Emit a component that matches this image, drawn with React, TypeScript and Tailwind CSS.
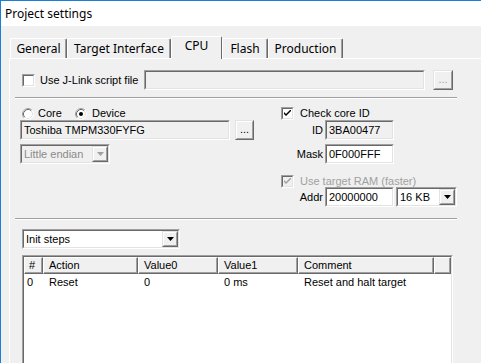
import React from "react";

const SUNK_OUT = "border border-t-[#a0a0a0] border-l-[#a0a0a0] border-r-white border-b-white";
const SUNK_IN = "h-full w-full border border-t-[#696969] border-l-[#696969] border-r-[#e3e3e3] border-b-[#e3e3e3]";
const RAISE_OUT = "border border-t-[#e3e3e3] border-l-[#e3e3e3] border-r-[#696969] border-b-[#696969] bg-[#f0f0f0]";
const RAISE_IN = "h-full w-full border border-t-white border-l-white border-r-[#a0a0a0] border-b-[#a0a0a0] flex items-center justify-center";

function Field({ w, bg, children }: { w: string; bg: string; children?: React.ReactNode }) {
  return (
    <div className={`${SUNK_OUT} ${w} h-[20px] shrink-0`}>
      <div className={`${SUNK_IN} ${bg} flex items-center pl-[2px] overflow-hidden whitespace-nowrap`}>{children}</div>
    </div>
  );
}

function Btn({ w, children }: { w: string; children?: React.ReactNode }) {
  return (
    <div className={`${RAISE_OUT} ${w} h-[20px] shrink-0`}>
      <div className={RAISE_IN}>{children}</div>
    </div>
  );
}

function Arrow({ color }: { color: string }) {
  return (
    <svg width="7" height="4" viewBox="0 0 7 4">
      <polygon points="0,0 7,0 3.5,4" fill={color} />
    </svg>
  );
}

function Combo({ w, bg, text, textColor, arrowColor }: { w: string; bg: string; text: string; textColor: string; arrowColor: string }) {
  return (
    <div className={`${SUNK_OUT} ${w} h-[20px] shrink-0`}>
      <div className={`${SUNK_IN} ${bg} flex items-center`}>
        <div className={`flex-1 pl-[2px] ${textColor} whitespace-nowrap overflow-hidden`}>{text}</div>
        <div className={`${RAISE_OUT} w-[16px] h-full shrink-0`}>
          <div className={RAISE_IN}>
            <Arrow color={arrowColor} />
          </div>
        </div>
      </div>
    </div>
  );
}

function Check({ checked, disabled }: { checked?: boolean; disabled?: boolean }) {
  return (
    <div className={`${SUNK_OUT} w-[13px] h-[13px] shrink-0`}>
      <div className={`${SUNK_IN} ${disabled ? "bg-[#f0f0f0]" : "bg-white"} flex items-center justify-center`}>
        {checked && (
          <svg width="7" height="7" viewBox="0 0 7 7">
            <path d="M0 2 L0 4 L2 6 L7 1 L7 -1 L2 4 Z" fill={disabled ? "#a0a0a0" : "#000"} />
          </svg>
        )}
      </div>
    </div>
  );
}

function Radio({ checked }: { checked?: boolean }) {
  return (
    <svg width="12" height="12" viewBox="0 0 12 12" className="shrink-0">
      <circle cx="6" cy="6" r="5.5" fill="#fff" />
      <path d="M2.11 9.89 A5.5 5.5 0 0 1 9.89 2.11" stroke="#a0a0a0" fill="none" />
      <path d="M9.89 2.11 A5.5 5.5 0 0 1 2.11 9.89" stroke="#fff" fill="none" />
      <path d="M2.82 9.18 A4.5 4.5 0 0 1 9.18 2.82" stroke="#696969" fill="none" />
      <path d="M9.18 2.82 A4.5 4.5 0 0 1 2.82 9.18" stroke="#e3e3e3" fill="none" />
      {checked && <circle cx="6" cy="6" r="2" fill="#000" />}
    </svg>
  );
}

function Sep() {
  return <div className="ml-[5px] w-[442px] h-[2px] border-t border-b border-t-[#a0a0a0] border-b-white" />;
}

const HCELL =
  "h-full shrink-0 border border-t-white border-l-white border-r-[#696969] border-b-[#696969] shadow-[inset_-1px_-1px_0_#a0a0a0] flex items-center whitespace-nowrap";

export default function App() {
  const tabs = [
    { t: "General", w: "w-[57px]" },
    { t: "Target Interface", w: "w-[104px]" },
    { t: "CPU", w: "w-[51px]", sel: true },
    { t: "Flash", w: "w-[46px]" },
    { t: "Production", w: "w-[75px]" },
  ];
  return (
    <div className="w-[481px] h-[363px] overflow-hidden bg-[#f0f0f0] border-t border-l border-[#1a7fd6] flex flex-col font-['Liberation_Sans',Arial,sans-serif] text-[11px] text-black leading-[13px]">
      <div className="h-[25px] shrink-0 bg-white pl-[4px] flex items-center font-['Noto_Sans',sans-serif] text-[12px] leading-[16px]">
        Project settings
      </div>
      <div className="mt-[10px] ml-[9px] h-[22px] flex items-start shrink-0 font-['Noto_Sans',sans-serif] text-[12px] leading-[16px]">
        {tabs.map((tb) =>
          tb.sel ? (
            <div
              key={tb.t}
              className={`${tb.w} h-[23px] relative z-10 bg-[#f0f0f0] border-t border-l border-r border-t-white border-l-white border-r-[#696969] rounded-t-[2px] flex justify-center pt-[1px]`}
            >
              {tb.t}
            </div>
          ) : (
            <div
              key={tb.t}
              className={`${tb.w} h-[20px] mt-[2px] border-t border-l border-r border-t-white border-l-white border-r-[#696969] rounded-t-[2px] flex justify-center pt-[2px] shadow-[inset_-1px_0_0_#a0a0a0]`}
            >
              {tb.t}
            </div>
          )
        )}
      </div>
      <div className="ml-[8px] w-[520px] flex-1 border-t border-l border-white flex flex-col">
        {/* script row */}
        <div className="mt-[11px] h-[20px] flex items-center">
          <div className="ml-[12px]">
            <Check />
          </div>
          <div className="w-[109px] pl-[5px] whitespace-nowrap">Use J-Link script file</div>
          <Field w="w-[281px]" bg="bg-[#f0f0f0]" />
          <div className="ml-[8px]">
            <Btn w="w-[20px]">
              <span className="text-[#a0a0a0] leading-[8px] pb-[2px]">...</span>
            </Btn>
          </div>
        </div>
        <div className="mt-[7px]">
          <Sep />
        </div>
        {/* section 2 */}
        <div className="mt-[8px] flex">
          <div className="ml-[10px] w-[261px] flex flex-col">
            <div className="h-[13px] flex items-center">
              <div className="w-[53px] ml-[2px] flex items-center">
                <Radio />
                <span className="ml-[4px]">Core</span>
              </div>
              <Radio checked />
              <span className="ml-[5px]">Device</span>
            </div>
            <div className="h-[20px] flex items-center">
              <Field w="w-[210px]" bg="bg-[#f0f0f0]">
                Toshiba TMPM330FYFG
              </Field>
              <div className="ml-[5px]">
                <Btn w="w-[19px]">
                  <span className="leading-[8px] pb-[2px]">...</span>
                </Btn>
              </div>
            </div>
            <div className="mt-[4px]">
              <Combo w="w-[90px]" bg="bg-[#f0f0f0]" text="Little endian" textColor="text-[#8a8a8a]" arrowColor="#a0a0a0" />
            </div>
          </div>
          <div className="flex flex-col">
            <div className="h-[13px] flex items-center">
              <Check checked />
              <span className="ml-[6px]">Check core ID</span>
            </div>
            <div className="h-[20px] flex items-center">
              <div className="w-[44px] text-right pr-[2px]">ID</div>
              <Field w="w-[69px]" bg="bg-[#f0f0f0]">
                3BA00477
              </Field>
            </div>
            <div className="mt-[4px] h-[20px] flex items-center">
              <div className="w-[44px] text-right pr-[2px]">Mask</div>
              <Field w="w-[69px]" bg="bg-white">
                0F000FFF
              </Field>
            </div>
            <div className="mt-[11px] h-[13px] flex items-center">
              <Check checked disabled />
              <span className="ml-[6px] text-[#a0a0a0]">Use target RAM (faster)</span>
            </div>
            <div className="-mt-[1px] h-[20px] flex items-center">
              <div className="w-[44px] text-right pr-[2px]">Addr</div>
              <Field w="w-[69px]" bg="bg-white">
                20000000
              </Field>
              <div className="ml-[2px]">
                <Combo w="w-[61px]" bg="bg-white" text="16 KB" textColor="text-black" arrowColor="#000" />
              </div>
            </div>
          </div>
        </div>
        <div className="mt-[11px]">
          <Sep />
        </div>
        <div className="mt-[9px] ml-[12px]">
          <Combo w="w-[158px]" bg="bg-white" text="Init steps" textColor="text-black" arrowColor="#000" />
        </div>
        {/* list */}
        <div className={`mt-[6px] ml-[12px] w-[431px] h-[130px] ${SUNK_OUT}`}>
          <div className={`${SUNK_IN} bg-white flex flex-col`}>
            <div className="h-[17px] flex bg-[#f0f0f0]">
              <div className={`${HCELL} w-[19px] pl-[4px]`}>#</div>
              <div className={`${HCELL} w-[95px] pl-[5px]`}>Action</div>
              <div className={`${HCELL} w-[80px] pl-[5px]`}>Value0</div>
              <div className={`${HCELL} w-[80px] pl-[5px]`}>Value1</div>
              <div className={`${HCELL} w-[136px] pl-[5px]`}>Comment</div>
              <div className={`${HCELL} flex-1`} />
            </div>
            <div className="h-[17px] flex items-center whitespace-nowrap">
              <div className="w-[19px] pl-[3px]">0</div>
              <div className="w-[95px] pl-[6px]">Reset</div>
              <div className="w-[80px] pl-[6px]">0</div>
              <div className="w-[80px] pl-[6px]">0 ms</div>
              <div className="w-[136px] pl-[6px]">Reset and halt target</div>
            </div>
          </div>
        </div>
      </div>
    </div>
  );
}
